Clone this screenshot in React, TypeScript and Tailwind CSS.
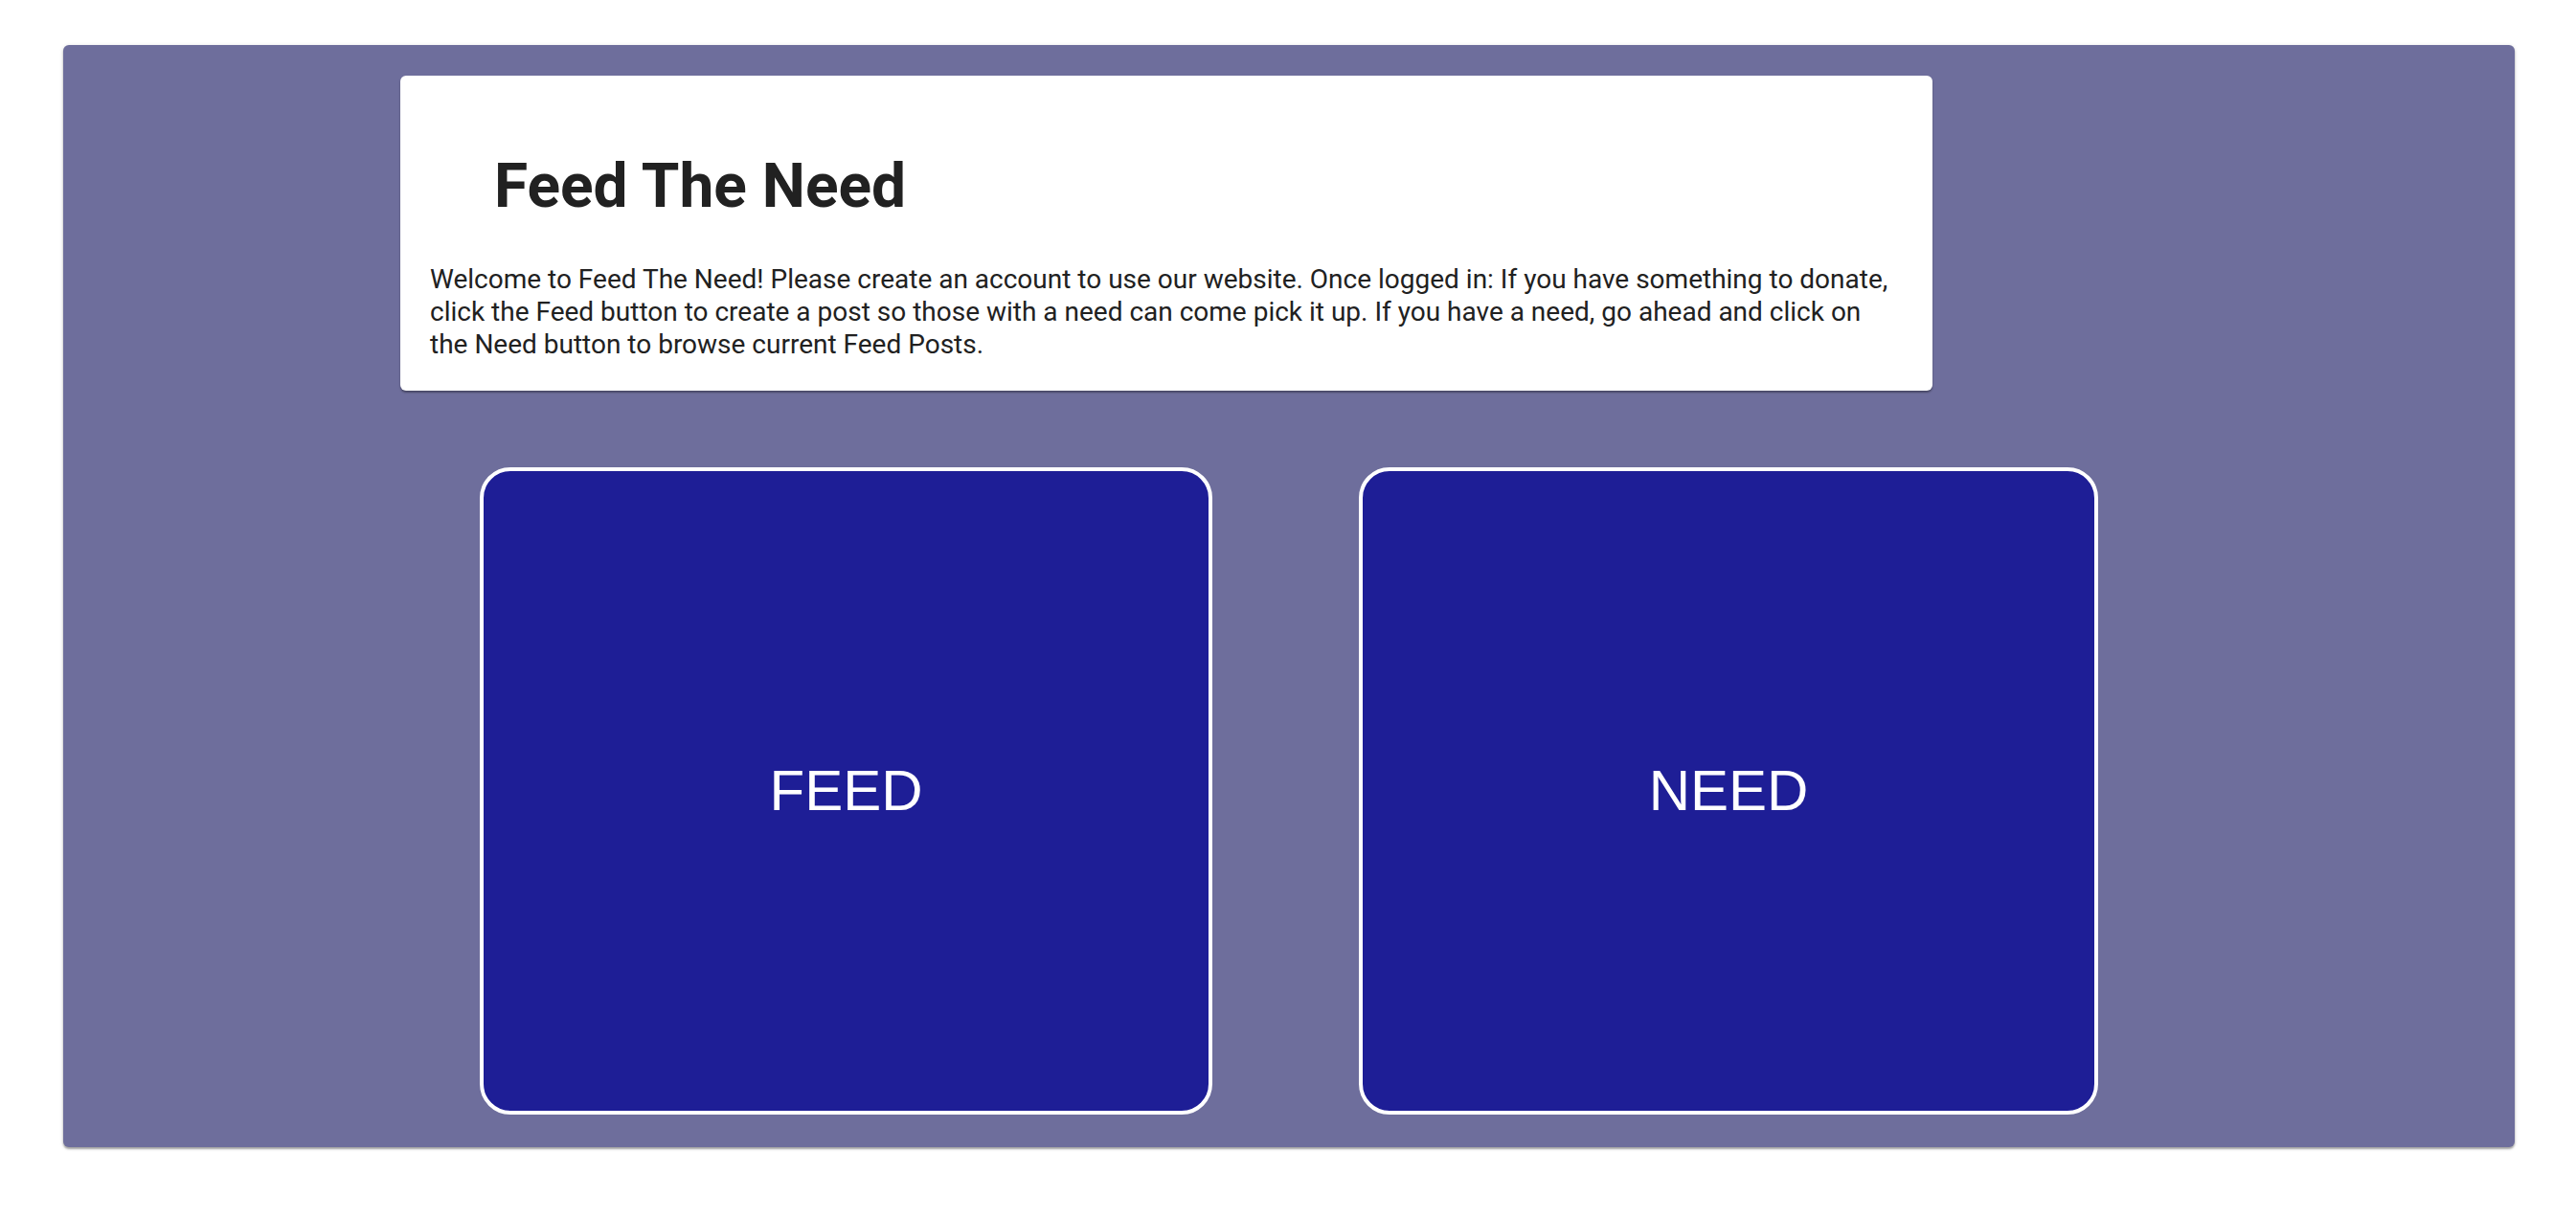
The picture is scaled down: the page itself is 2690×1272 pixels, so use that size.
const intro =
  "Welcome to Feed The Need! Please create an account to use our website. Once logged in: If you have something to donate, click the Feed button to create a post so those with a need can come pick it up. If you have a need, go ahead and click on the Need button to browse current Feed Posts."

const BigButton = ({ label, width }: { label: string; width: string }) => {
  return (
    <button
      className={`${width} h-[676px] flex items-center justify-center rounded-[32px] border-4 border-white bg-[#1e1e96] text-white text-[60px] font-['Liberation_Sans',Arial,sans-serif]`}
    >
      {label}
    </button>
  )
}

const App = () => {
  return (
    <div className="w-full min-h-[1272px] bg-white pt-[47px] pl-[66px] font-['Roboto',sans-serif]">
      <div className="w-[2560px] h-[1151px] rounded-[6px] bg-[#6e6e9c] shadow-[0_2px_2px_rgba(0,0,0,0.3),0_1px_4px_rgba(0,0,0,0.15)] pt-[32px] flex flex-col">

        <div className="ml-[352px] w-[1600px] h-[329px] rounded-[6px] bg-white shadow-[0_2px_2px_rgba(0,0,0,0.35)] pl-[31px] pr-[37px] pt-[78px]">
          <h1 className="pl-[67px] text-[64px] leading-[76px] font-bold text-[#212121]">Feed The Need</h1>
          <p className="mt-[42px] text-[28px] leading-[34px] text-[#212121]">{intro}</p>
        </div>

        <div className="mt-[80px] flex justify-center gap-[153px]">
          <BigButton label="FEED" width="w-[765px]" />
          <BigButton label="NEED" width="w-[772px]" />
        </div>

      </div>
    </div>
  )
}

export default App
